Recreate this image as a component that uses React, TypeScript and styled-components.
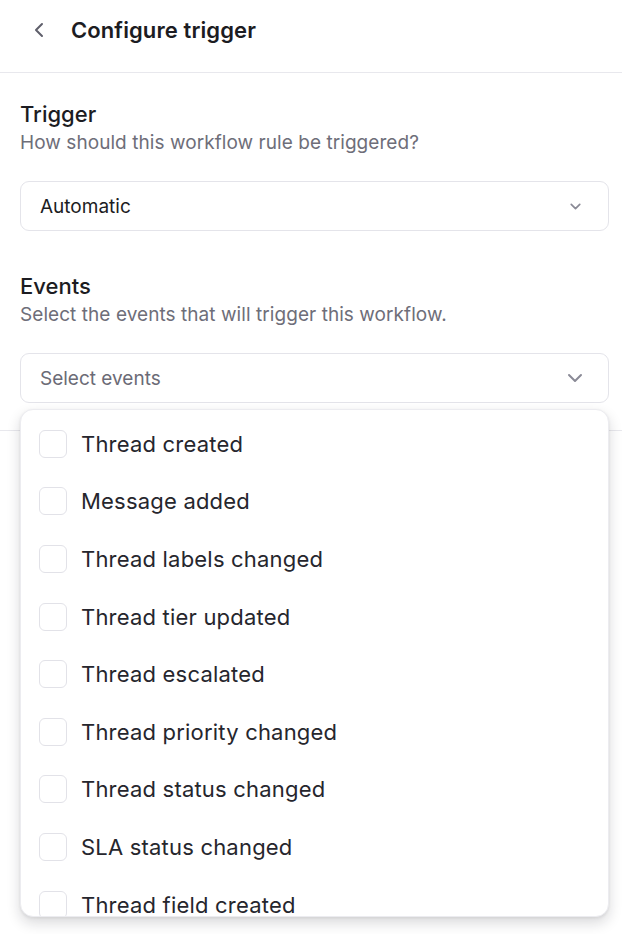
import React from "react";
import styled, { createGlobalStyle } from "styled-components";
import { ChevronDown, ChevronLeft } from "lucide-react";

const GlobalStyle = createGlobalStyle`
  html, body {
    margin: 0;
    padding: 0;
    background: #fff;
  }
  body {
    font-family: Inter, "Noto Sans", sans-serif;
    color: #1c1c22;
    -webkit-font-smoothing: antialiased;
  }
`;

const Page = styled.div`
  position: relative;
  width: 622px;
  min-height: 934px;
  background: #fff;
  overflow: hidden;
`;

const Header = styled.header`
  height: 73px;
  display: flex;
  align-items: flex-start;
  gap: 20px;
  padding: 15px 0 0 27px;
  border-bottom: 1px solid #e8e8ed;
  box-sizing: border-box;
`;

const BackButton = styled.button`
  display: flex;
  align-items: center;
  justify-content: center;
  height: 30px;
  padding: 0;
  border: none;
  background: none;
  color: #5f5f6b;
  cursor: pointer;
`;

const HeaderTitle = styled.h1`
  margin: 0;
  font-size: 22px;
  line-height: 30px;
  font-weight: 600;
  letter-spacing: 0.1px;
  color: #1c1c22;
`;

const Section = styled.section`
  position: relative;
  padding: 27px 13px 27px 20px;
  border-bottom: 1px solid #e8e8ed;
`;

const Field = styled.div<{ $gapTop?: number }>`
  margin-top: ${(p) => p.$gapTop ?? 0}px;
`;

const FieldTitle = styled.h2`
  margin: 0;
  font-size: 22px;
  line-height: 28px;
  font-weight: 500;
  color: #1c1c22;
`;

const FieldHint = styled.p`
  margin: 3px 0 0;
  font-size: 19px;
  line-height: 24px;
  letter-spacing: 0.06px;
  color: #6e6e79;
`;

const SelectBox = styled.div<{ $placeholder?: boolean }>`
  margin-top: 26px;
  height: 50px;
  box-sizing: border-box;
  display: flex;
  align-items: center;
  justify-content: space-between;
  padding: 0 24px 0 19px;
  border: 1px solid #e4e4ea;
  border-radius: 9px;
  font-size: 19px;
  color: ${(p) => (p.$placeholder ? "#6b6b76" : "#1c1c22")};
  background: #fff;
`;

const Caret = styled.span<{ $nudge?: number }>`
  display: flex;
  margin-right: ${(p) => p.$nudge ?? 0}px;
  color: #8a8a96;
`;

const Menu = styled.div`
  position: absolute;
  left: 20px;
  right: 13px;
  top: calc(100% - 21px);
  height: 508px;
  box-sizing: border-box;
  padding: 5px 0 0 18px;
  background: #fff;
  border: 1px solid #ececf0;
  border-radius: 13px;
  box-shadow: 0 6px 14px rgba(20, 20, 30, 0.16), 0 1px 3px rgba(20, 20, 30, 0.08);
  overflow: hidden;
  z-index: 2;
`;

const Option = styled.label`
  height: 57.6px;
  display: flex;
  align-items: center;
  gap: 14px;
  font-size: 22px;
  letter-spacing: 0.2px;
  color: #26262d;
  cursor: pointer;
`;

const Box = styled.span`
  width: 28px;
  height: 28px;
  box-sizing: border-box;
  border: 1px solid #e2e2e8;
  border-radius: 6px;
  background: #fff;
  flex-shrink: 0;
`;

const events = [
  "Thread created",
  "Message added",
  "Thread labels changed",
  "Thread tier updated",
  "Thread escalated",
  "Thread priority changed",
  "Thread status changed",
  "SLA status changed",
  "Thread field created",
];

export default function App() {
  return (
    <Page>
      <GlobalStyle />
      <Header>
        <BackButton aria-label="Back">
          <ChevronLeft size={24} strokeWidth={2} />
        </BackButton>
        <HeaderTitle>Configure trigger</HeaderTitle>
      </Header>

      <Section>
        <Field>
          <FieldTitle>Trigger</FieldTitle>
          <FieldHint>How should this workflow rule be triggered?</FieldHint>
          <SelectBox>
            Automatic
            <Caret>
              <ChevronDown size={17} strokeWidth={2.4} />
            </Caret>
          </SelectBox>
        </Field>

        <Field $gapTop={41}>
          <FieldTitle>Events</FieldTitle>
          <FieldHint>Select the events that will trigger this workflow.</FieldHint>
          <SelectBox $placeholder>
            Select events
            <Caret $nudge={-3}>
              <ChevronDown size={24} strokeWidth={2} />
            </Caret>
          </SelectBox>
        </Field>

        <Menu role="listbox">
          {events.map((name) => (
            <Option key={name}>
              <Box />
              {name}
            </Option>
          ))}
        </Menu>
      </Section>
    </Page>
  );
}
